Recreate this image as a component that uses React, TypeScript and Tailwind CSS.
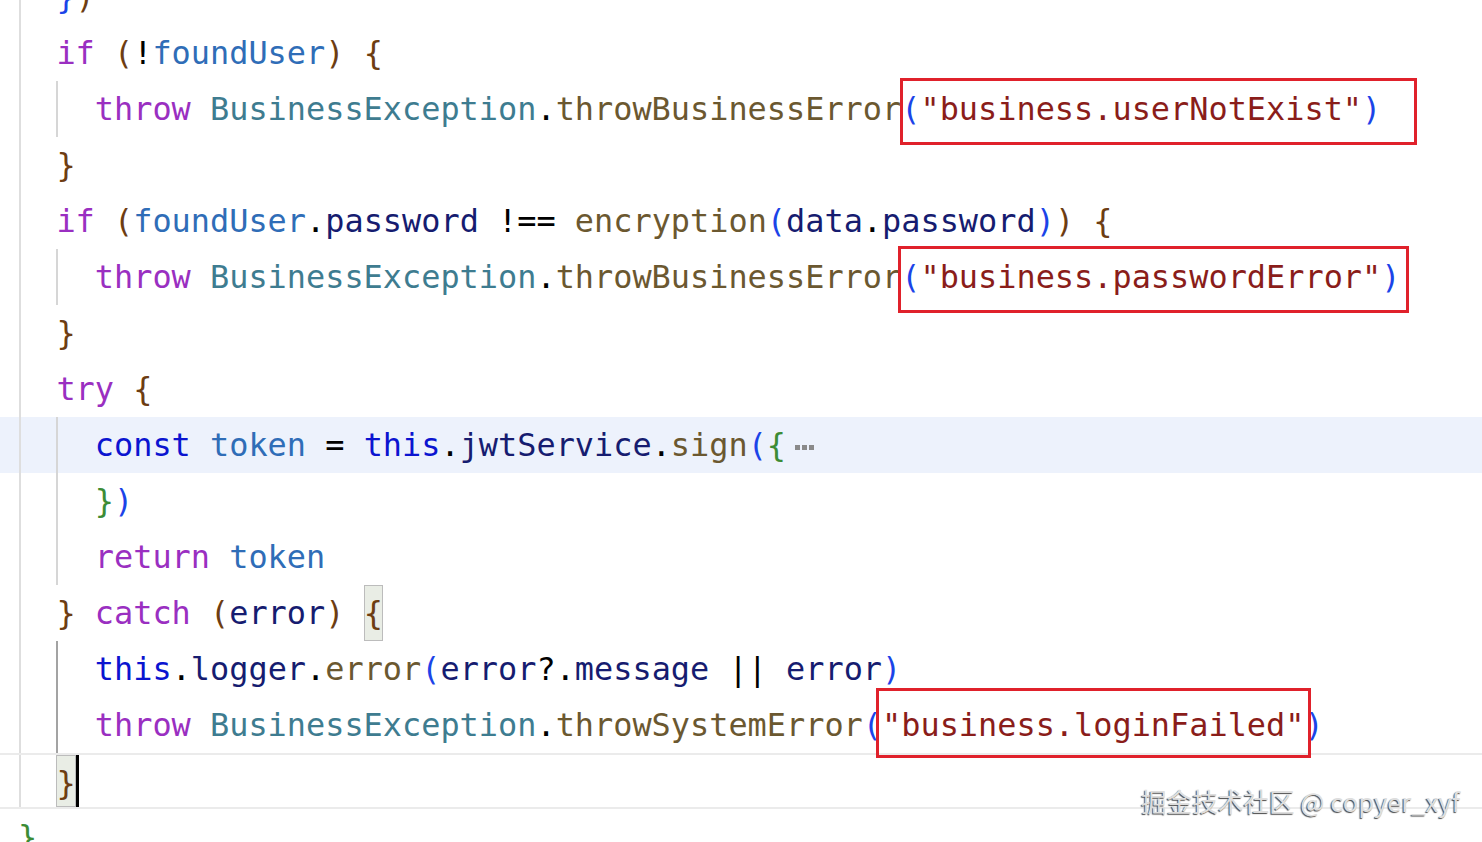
import type { ReactNode } from "react";
import clsx from "clsx";

// syntax colours
const K = "text-[#9a2fc1]"; // if / throw / try / catch / return
const B = "text-[#0b14d0]"; // const / this
const ID = "text-[#2f6db7]"; // locals
const CL = "text-[#3e7c90]"; // class
const F = "text-[#161c70]"; // fields / params
const FN = "text-[#6b5830]"; // calls
const S = "text-[#8a1d1a]"; // strings
const BR = "text-[#6d3d12]"; // outer brackets
const BP = "text-[#1b44e8]"; // call parens
const G = "text-[#3c8c35]"; // object braces
const O = "text-black";

type Tok = [string, string];

function Toks({ items }: { items: Tok[] }) {
  return (
    <>
      {items.map(([t, c], i) => (
        <span key={i} className={c}>
          {t}
        </span>
      ))}
    </>
  );
}

function Row({
  children,
  hl,
  cur,
  noGutter,
}: {
  children: ReactNode;
  hl?: boolean;
  cur?: boolean;
  noGutter?: boolean;
}) {
  return (
    <div
      className={clsx(
        "flex h-[56px] items-center whitespace-pre leading-[56px]",
        hl && "bg-[#edf2fc]",
        cur && "box-border border-y-2 border-[#ebebeb]"
      )}
    >
      <div className="w-[19px] shrink-0 self-stretch" />
      <div className={clsx("w-[2px] shrink-0 self-stretch", !noGutter && "bg-[#dedede]")} />
      <div className="-ml-[3px] flex h-full items-center">{children}</div>
    </div>
  );
}

// two columns of indent with the block guide drawn on the left edge
function Guide({ dark }: { dark?: boolean }) {
  return (
    <>
      <span>{"  "}</span>
      <span
        className={clsx(
          "self-stretch",
          dark ? "shadow-[inset_2px_0_0_#a3a3a3]" : "shadow-[inset_2px_0_0_#d6d6d6]"
        )}
      >
        {"  "}
      </span>
    </>
  );
}

function Throw({ fn, msg }: { fn: string; msg: string }) {
  return (
    <Toks
      items={[
        ["throw", K],
        [" ", O],
        ["BusinessException", CL],
        [".", O],
        [fn, FN],
        ["(", BP],
        [`"${msg}"`, S],
        [")", BP],
      ]}
    />
  );
}

export default function App() {
  return (
    <div className="relative h-[842px] w-[1482px] overflow-hidden bg-white font-['DejaVu_Sans_Mono',monospace] text-[31.9px]">
      <div className="mt-[-31px] flex flex-col">
        <Row>
          <Toks items={[["  ", O], ["}", BP], [")", BR]]} />
        </Row>
        <Row>
          <Toks
            items={[
              ["  ", O],
              ["if", K],
              [" ", O],
              ["(", BR],
              ["!", O],
              ["foundUser", ID],
              [")", BR],
              [" ", O],
              ["{", BR],
            ]}
          />
        </Row>
        <Row>
          <Guide />
          <Throw fn="throwBusinessError" msg="business.userNotExist" />
        </Row>
        <Row>
          <Toks items={[["  ", O], ["}", BR]]} />
        </Row>
        <Row>
          <Toks
            items={[
              ["  ", O],
              ["if", K],
              [" ", O],
              ["(", BR],
              ["foundUser", ID],
              [".", O],
              ["password", F],
              [" !== ", O],
              ["encryption", FN],
              ["(", BP],
              ["data", F],
              [".", O],
              ["password", F],
              [")", BP],
              [")", BR],
              [" ", O],
              ["{", BR],
            ]}
          />
        </Row>
        <Row>
          <Guide />
          <Throw fn="throwBusinessError" msg="business.passwordError" />
        </Row>
        <Row>
          <Toks items={[["  ", O], ["}", BR]]} />
        </Row>
        <Row>
          <Toks items={[["  ", O], ["try", K], [" ", O], ["{", BR]]} />
        </Row>
        <Row hl>
          <Guide />
          <Toks
            items={[
              ["const", B],
              [" ", O],
              ["token", ID],
              [" = ", O],
              ["this", B],
              [".", O],
              ["jwtService", F],
              [".", O],
              ["sign", FN],
              ["(", BP],
              ["{", G],
            ]}
          />
          {/* folded region marker */}
          <span className="ml-[9px] mt-[4px] flex gap-[2px]">
            <span className="h-[5px] w-[5px] bg-[#8a8a8a]" />
            <span className="h-[5px] w-[5px] bg-[#8a8a8a]" />
            <span className="h-[5px] w-[5px] bg-[#8a8a8a]" />
          </span>
        </Row>
        <Row>
          <Guide />
          <Toks items={[["}", G], [")", BP]]} />
        </Row>
        <Row>
          <Guide />
          <Toks items={[["return", K], [" ", O], ["token", ID]]} />
        </Row>
        <Row>
          <Toks
            items={[
              ["  ", O],
              ["}", BR],
              [" ", O],
              ["catch", K],
              [" ", O],
              ["(", BR],
              ["error", F],
              [")", BR],
              [" ", O],
            ]}
          />
          <span className={clsx("self-stretch bg-[#e9ede5] shadow-[inset_0_0_0_1px_#bcbcbc]", BR)}>{"{"}</span>
        </Row>
        <Row>
          <Guide dark />
          <Toks
            items={[
              ["this", B],
              [".", O],
              ["logger", F],
              [".", O],
              ["error", FN],
              ["(", BP],
              ["error", F],
              ["?.", O],
              ["message", F],
              [" || ", O],
              ["error", F],
              [")", BP],
            ]}
          />
        </Row>
        <Row>
          <Guide dark />
          <Throw fn="throwSystemError" msg="business.loginFailed" />
        </Row>
        <Row cur>
          <span>{"  "}</span>
          <span className={clsx("self-stretch bg-[#e9ede5] shadow-[inset_0_0_0_1px_#bcbcbc]", BR)}>{"}"}</span>
          <span className="w-[3px] self-stretch bg-black" />
        </Row>
        <Row noGutter>
          <Toks items={[["}", G]]} />
        </Row>
      </div>

      {/* red annotation boxes */}
      <div className="absolute left-[900px] top-[78px] h-[67px] w-[517px] border-[3px] border-[#e0212b]" />
      <div className="absolute left-[898px] top-[246px] h-[67px] w-[511px] border-[3px] border-[#e0212b]" />
      <div className="absolute left-[876px] top-[688px] h-[70px] w-[435px] border-[3px] border-[#e0212b]" />

      {/* watermark */}
      <div className="absolute left-[1141px] top-[783px] font-['Noto_Sans_CJK_SC',sans-serif] text-[25.6px] leading-[36px] text-[#dedede] [text-shadow:-1px_1px_1px_#4a4a4a]">
        掘金技术社区 @ copyer_xyf
      </div>
    </div>
  );
}
